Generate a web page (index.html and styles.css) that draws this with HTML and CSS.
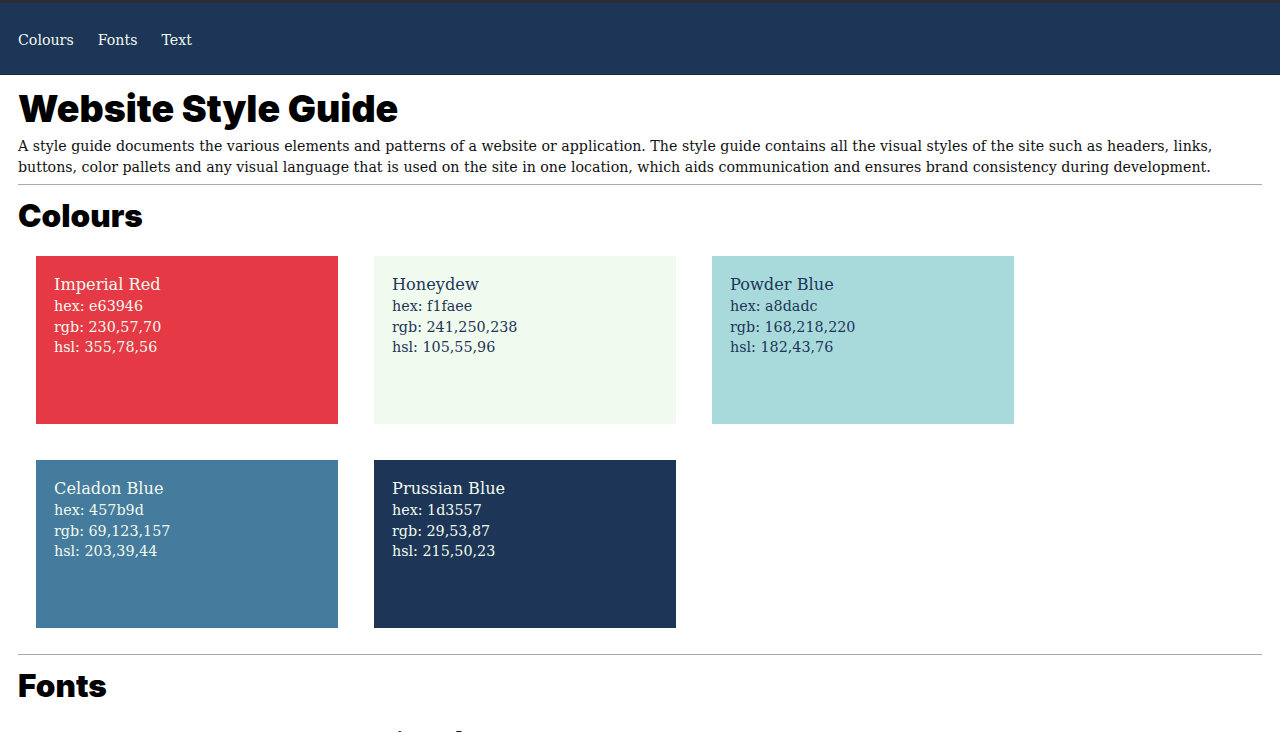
FILE: index.html
```html
<!DOCTYPE html>
<html lang="en">
<head>
<meta charset="utf-8">
<title>Website Style Guide</title>
<link rel="stylesheet" href="styles.css">
</head>
<body>
<nav class="nav">
  <a class="nav-link" href="#colours">Colours</a>
  <a class="nav-link" href="#fonts">Fonts</a>
  <a class="nav-link" href="#text">Text</a>
</nav>
<main class="main">
  <h1 class="title">Website Style Guide</h1>
  <p class="intro">A style guide documents the various elements and patterns of a website or application. The style guide contains all the visual styles of the site such as headers, links, buttons, color pallets and any visual language that is used on the site in one location, which aids communication and ensures brand consistency during development.</p>
  <hr class="rule">
  <section id="colours">
    <h2 class="section-title">Colours</h2>
    <div class="swatches">
      <div class="swatch swatch-red">
        <div class="swatch-name">Imperial Red</div>
        <div>hex: e63946</div>
        <div>rgb: 230,57,70</div>
        <div>hsl: 355,78,56</div>
      </div>
      <div class="swatch swatch-honeydew">
        <div class="swatch-name">Honeydew</div>
        <div>hex: f1faee</div>
        <div>rgb: 241,250,238</div>
        <div>hsl: 105,55,96</div>
      </div>
      <div class="swatch swatch-powder">
        <div class="swatch-name">Powder Blue</div>
        <div>hex: a8dadc</div>
        <div>rgb: 168,218,220</div>
        <div>hsl: 182,43,76</div>
      </div>
      <div class="swatch swatch-celadon">
        <div class="swatch-name">Celadon Blue</div>
        <div>hex: 457b9d</div>
        <div>rgb: 69,123,157</div>
        <div>hsl: 203,39,44</div>
      </div>
      <div class="swatch swatch-prussian">
        <div class="swatch-name">Prussian Blue</div>
        <div>hex: 1d3557</div>
        <div>rgb: 29,53,87</div>
        <div>hsl: 215,50,23</div>
      </div>
    </div>
  </section>
  <hr class="rule">
  <section id="fonts">
    <h2 class="section-title">Fonts</h2>
    <div class="font-samples">
      <div class="font-sample">Merriweather</div>
    </div>
  </section>
</main>
</body>
</html>
```
FILE: styles.css
```css
html, body {
  margin: 0;
  padding: 0;
  background: #ffffff;
}
body {
  font-family: "DejaVu Serif", "Liberation Serif", serif;
  color: #111;
}
.nav {
  box-sizing: border-box;
  height: 75px;
  background: #1d3557;
  border-top: 3px solid #2a2d33;
  border-bottom: 1px solid #16283f;
  display: flex;
  align-items: center;
  gap: 24px;
  padding: 3px 18px 0;
}
.nav-link {
  color: #f1faee;
  text-decoration: none;
  font-size: 14.2px;
}
.main {
  padding: 0 18px;
}
.title {
  font-family: Inter, "DejaVu Sans", sans-serif;
  font-weight: 900;
  font-size: 37.5px;
  line-height: 40px;
  margin: 14px 0 7px;
  color: #000;
}
.intro {
  font-size: 14.2px;
  line-height: 21px;
  margin: 0;
  color: #111;
}
.rule {
  border: 0;
  border-top: 1px solid #a9a9a9;
  margin: 6px 0 0;
}
.section-title {
  font-family: Inter, "DejaVu Sans", sans-serif;
  font-weight: 900;
  font-size: 31.5px;
  line-height: 36px;
  margin: 13px 0 0;
  color: #000;
}
.swatches {
  display: flex;
  flex-wrap: wrap;
  gap: 36px;
  padding: 22px 18px 20px;
}
.swatch {
  box-sizing: border-box;
  width: 302px;
  height: 168px;
  padding: 18px 18px;
  font-size: 14.3px;
  line-height: 20.5px;
}
.swatch-name {
  font-size: 16.2px;
  line-height: 22px;
  margin-bottom: 0;
}
.swatch-red { background: #e63946; color: #f1faee; }
.swatch-honeydew { background: #f1faee; color: #1d3557; }
.swatch-powder { background: #a8dadc; color: #1d3557; }
.swatch-celadon { background: #457b9d; color: #f1faee; }
.swatch-prussian { background: #1d3557; color: #f1faee; }
.font-samples {
  padding: 24px 0 0 322px;
}
.font-sample {
  font-weight: bold;
  font-size: 20px;
}
```
